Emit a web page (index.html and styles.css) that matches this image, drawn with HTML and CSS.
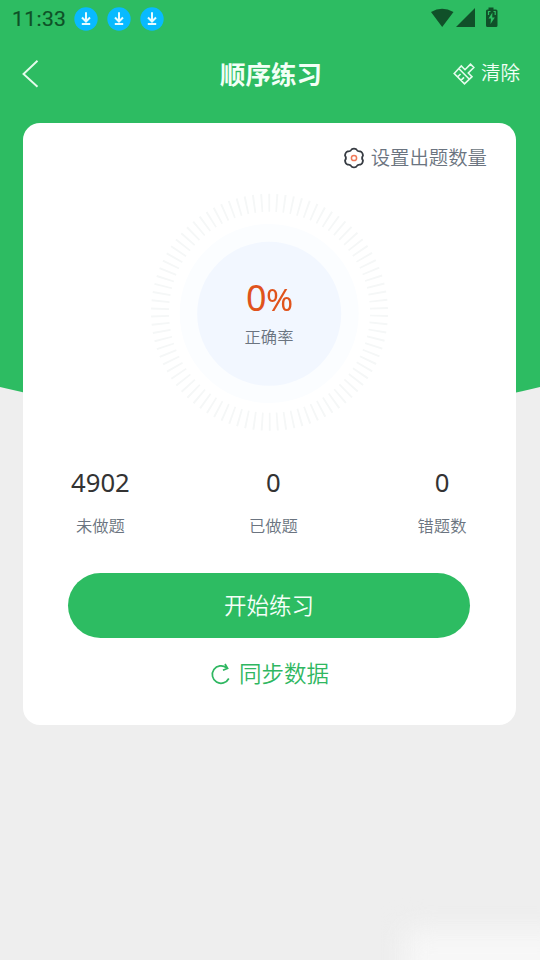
FILE: index.html
```
<!DOCTYPE html>
<html lang="zh-CN">
<head>
<meta charset="utf-8">
<title>顺序练习</title>
<link rel="stylesheet" href="styles.css">
</head>
<body>
<div class="screen">
  <svg class="backdrop" width="540" height="420" viewBox="0 0 540 420"><path d="M0 0H540V387Q270 453 0 387Z"/></svg>
  <div class="glow"></div>
  <header class="status">
    <span class="time">11:33</span>
    <div class="downloads">
      <svg width="24" height="24" viewBox="0 0 24 24"><circle cx="12" cy="12" r="11.7"/><path d="M12 5.2V14M8 10.5l4 4 4-4M7.8 17h8.4"/></svg>
      <svg width="24" height="24" viewBox="0 0 24 24"><circle cx="12" cy="12" r="11.7"/><path d="M12 5.2V14M8 10.5l4 4 4-4M7.8 17h8.4"/></svg>
      <svg width="24" height="24" viewBox="0 0 24 24"><circle cx="12" cy="12" r="11.7"/><path d="M12 5.2V14M8 10.5l4 4 4-4M7.8 17h8.4"/></svg>
    </div>
    <svg class="signals" width="70" height="22" viewBox="0 0 70 22"><path d="M1 5Q12-1.5 23.5 5L12.2 20ZM45 1V20H26ZM58.5 2.4V.5H63.5V2.4H66a1.500 1.500 0 0 1 1.500 1.500V18.500a1.500 1.500 0 0 1-1.500 1.500H57.500a1.500 1.500 0 0 1-1.500-1.500V3.900a1.500 1.500 0 0 1 1.500-1.500Z"/><path class="bolt" d="M62.400 5.500L58.500 11.500H61L60.500 17L64.800 10.500H62.200Z"/><path class="notch" d="M58.500 8V4.500H60.500M63.500 4.500H65.200V8"/></svg>
  </header>
  <nav class="nav">
    <svg class="back" width="20" height="30" viewBox="0 0 20 30"><path d="M16.500 1.800L2.500 15L16.500 27.800"/></svg>
    <h1>顺序练习</h1>
    <div class="clear">
      <svg width="24" height="24" viewBox="0 0 24 24"><path d="M1.200 11.500L8.300 4L12 7.700L17.500 2.200L20.800 5.500L15.300 11L19 14.700L11.500 21.800ZM6 6.700L16.400 17.200M15.300 11L17 12.700M4.600 14.900L7.600 12M8 18.300L11 15.400"/></svg>
      <span>清除</span>
    </div>
  </nav>
  <main class="card">
    <div class="setting">
      <svg width="22" height="22" viewBox="0 0 22 22"><path d="M8.700 2.300Q11 1 13.300 2.300C14 4 15 4.600 17.200 4.300Q19.800 5.500 20 8.400C18.800 10 18.800 12 20 13.600Q19.800 16.500 17.200 17.700C15 17.400 14 18 13.300 19.700Q11 21 8.700 19.700C8 18 7 17.400 4.800 17.700Q2.200 16.500 2 13.600C3.200 12 3.200 10 2 8.400Q2.200 5.500 4.800 4.300C7 4.600 8 4 8.700 2.300Z"/><circle cx="11" cy="11" r="2.600"/></svg>
      <span>设置出题数量</span>
    </div>
    <section class="gauge">
      <svg class="dial" width="240" height="240" viewBox="0 0 240 240"><circle class="ticks" cx="119.500" cy="119.300" r="109.500" pathLength="900"/><circle class="halo" cx="119.200" cy="120.500" r="89.500"/><circle class="disc" cx="119.200" cy="120.800" r="72"/></svg>
      <div class="reading"><div class="score">0<span>%</span></div><div class="caption">正确率</div></div>
    </section>
    <section class="stats">
      <div class="stat"><b>4902</b><span>未做题</span></div>
      <div class="stat"><b>0</b><span>已做题</span></div>
      <div class="stat"><b>0</b><span>错题数</span></div>
    </section>
    <button class="start">开始练习</button>
    <div class="sync">
      <svg width="22" height="24" viewBox="0 0 22 24"><path d="M18.800 16.500A8.700 8.700 0 1 1 16.500 5.800M15 2L17.600 6.300L13 8.300"/></svg>
      <span>同步数据</span>
    </div>
  </main>
</div>
</body>
</html>
```
FILE: styles.css
```
* { box-sizing: border-box; }
body { margin: 0; font-family: "Noto Sans", "Noto Sans CJK SC", sans-serif; }
.screen { position: relative; width: 540px; height: 960px; overflow: hidden; background: #eeeeee; isolation: isolate; }
.backdrop { position: absolute; left: 0; top: 0; z-index: -1; fill: #2dbc62; }
.glow { position: absolute; right: -30px; bottom: -40px; width: 165px; height: 70px; background: #f7f7f7; filter: blur(14px); z-index: -1; }
.status { height: 38px; padding: 0 40px 1px 12px; display: flex; align-items: center; }
.time { width: 61.500px; font: 400 21px/36px Roboto, sans-serif; letter-spacing: .4px; color: #0e5127; -webkit-text-stroke: .2px #0e5127; }
.downloads { display: flex; gap: 9px; }
.downloads svg { display: block; fill: #08baff; }
.downloads path { fill: none; stroke: #e8fbff; stroke-width: 2; }
.signals { margin-left: auto; margin-top: -2px; fill: #105029; }
.signals .bolt { fill: #2dbc62; }
.signals .notch { fill: none; stroke: #2dbc62; stroke-width: 1.2; }
.nav { height: 85px; padding: 0 20px 14px 21px; display: grid; grid-template-columns: 99px 1fr 100px; align-items: center; color: #f2fff6; }
.nav svg { fill: none; stroke: #e4fbec; stroke-width: 1.7; }
.nav .back { stroke-width: 1.9; }
.nav h1 { margin: -2px 0 0 2px; text-align: center; font: 700 25.500px/36px "Noto Sans CJK SC", sans-serif; }
.clear { display: flex; align-items: center; justify-content: flex-end; gap: 4px; font: 350 19.500px/28px "Noto Sans CJK SC", sans-serif; white-space: nowrap; }
.clear span { margin-top: -3px; }
.clear svg { flex: none; stroke-width: 1.6; }
.card { width: 493px; height: 602px; margin-left: 23px; border-radius: 17px; background: #fff; display: flex; flex-direction: column; align-items: center; }
.setting { align-self: flex-end; margin: 21px 29px 0 0; height: 28px; display: flex; align-items: center; gap: 5.500px; font: 350 19.400px/28px "Noto Sans CJK SC", sans-serif; color: #6b7480; }
.setting svg { fill: none; stroke: #363b42; stroke-width: 1.700; }
.setting span { margin-top: -2px; }
.setting circle { stroke: #ee7959; stroke-width: 1.500; }
.gauge { display: grid; width: 240px; height: 240px; margin-top: 21px; place-items: center; }
.gauge > * { grid-area: 1 / 1; }
.dial { fill: none; }
.ticks { stroke: #f5f7f7; stroke-width: 18; stroke-dasharray: 2.400 7.600; stroke-dashoffset: -3.500; }
.halo { fill: #fbfdff; }
.disc { fill: #f2f7ff; }
.reading { text-align: center; margin: -2px 1px 0 0; }
.score { font-size: 36px; line-height: 44px; color: #e0531c; }
.score span { display: inline-block; font-size: 30.500px; transform: scaleX(1.07); }
.caption { font: 350 16.300px/24px "Noto Sans CJK SC", sans-serif; color: #6b7480; margin-top: 3px; }
.stats { width: 397px; margin-top: 32px; display: flex; justify-content: space-between; }
.stat { display: flex; flex-direction: column; align-items: center; min-width: 50px; }
.stat b { font-size: 25.700px; line-height: 36px; font-weight: 400; color: #333; }
.stat span { margin-top: 12px; font: 350 16.300px/24px "Noto Sans CJK SC", sans-serif; color: #6b7480; }
.stat:last-child { margin-right: 1px; }
.start { width: 402px; height: 65px; margin: 36px 2px 0 0; padding: 0 0 4px 1px; border: 0; border-radius: 33px; background: #2dbc62; color: #f5fff8; font: 350 22.500px/32px "Noto Sans CJK SC", sans-serif; }
.sync { margin-top: 20px; height: 32px; display: flex; align-items: center; gap: 7px; font: 350 22.500px/32px "Noto Sans CJK SC", sans-serif; color: #2fb761; }
.sync span { margin-top: -4px; }
.sync svg { fill: none; stroke: #2fb761; stroke-width: 1.700; }
```
